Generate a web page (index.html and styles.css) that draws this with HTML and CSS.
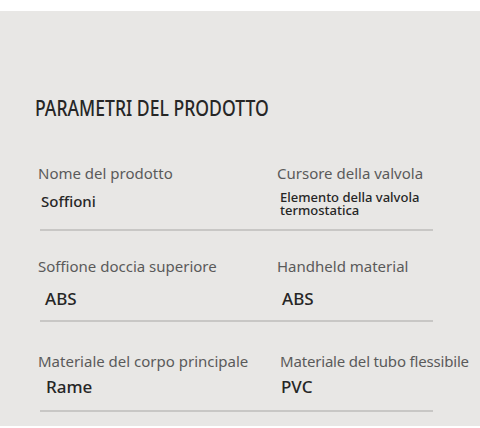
FILE: index.html
```html
<!DOCTYPE html>
<html lang="it">
<head>
<meta charset="utf-8">
<title>Parametri del prodotto</title>
<link rel="stylesheet" href="styles.css">
</head>
<body>
<main class="page">
  <h1 class="title">PARAMETRI DEL PRODOTTO</h1>

  <section class="row row--first">
    <div class="cell cell--left">
      <div class="label">Nome del prodotto</div>
      <div class="value value--small gap-8 indent-3">Soffioni</div>
    </div>
    <div class="cell">
      <div class="label">Cursore della valvola</div>
      <div class="value value--tiny gap-7 indent-3">
        <span class="line">Elemento della valvola</span>
        <span class="line">termostatica</span>
      </div>
    </div>
  </section>

  <section class="row row--second">
    <div class="cell cell--left">
      <div class="label">Soffione doccia superiore</div>
      <div class="value gap-12 indent-7">ABS</div>
    </div>
    <div class="cell">
      <div class="label">Handheld material</div>
      <div class="value gap-12 indent-5">ABS</div>
    </div>
  </section>

  <section class="row row--third">
    <div class="cell cell--left">
      <div class="label">Materiale del corpo principale</div>
      <div class="value gap-5 indent-8">Rame</div>
    </div>
    <div class="cell">
      <div class="label label--tight indent-3">Materiale del tubo flessibile</div>
      <div class="value gap-5 indent-4">PVC</div>
    </div>
  </section>
</main>
</body>
</html>
```

FILE: styles.css
```css
html, body {
  margin: 0;
  padding: 0;
  background: #ffffff;
}

body {
  font-family: "Noto Sans", "Open Sans", sans-serif;
  width: 480px;
  height: 428px;
  overflow: hidden;
}

.page {
  margin-top: 11px;
  height: 415px;
  background: #e8e7e5;
  padding: 80.5px 0 0 35px;
  box-sizing: border-box;
}

.title {
  margin: 0;
  font-size: 22px;
  line-height: 30px;
  font-weight: 500;
  color: #262626;
  white-space: nowrap;
  transform: scaleX(0.8);
  transform-origin: left center;
}

.row {
  display: grid;
  grid-template-columns: 237px 156px;
  width: 393px;
  margin-left: 5px;
  border-bottom: 2px solid #c8c7c5;
}

.row--first { padding: 41.5px 0 12px; }
.row--second { padding: 25px 0 10px; }
.row--third { padding: 29px 0 12px; }

.cell {
  min-width: 0;
  white-space: nowrap;
}

.cell--left {
  margin-left: -2px;
}

.label {
  font-size: 15px;
  line-height: 20px;
  color: #5a5a5a;
}

.label--tight {
  letter-spacing: -0.18px;
}

.value {
  font-size: 17px;
  line-height: 22px;
  color: #262626;
  font-weight: 500;
}

.value--small {
  font-size: 15px;
  line-height: 20px;
}

.value--tiny {
  font-size: 13px;
  line-height: 13px;
}

.line {
  display: block;
  height: 13px;
}

.gap-5 { margin-top: 5px; }
.gap-7 { margin-top: 7.5px; }
.gap-8 { margin-top: 8px; }
.gap-12 { margin-top: 12px; }

.indent-3 { margin-left: 3px; }
.indent-4 { margin-left: 4px; }
.indent-5 { margin-left: 5px; }
.indent-7 { margin-left: 7px; }
.indent-8 { margin-left: 8px; }
```
